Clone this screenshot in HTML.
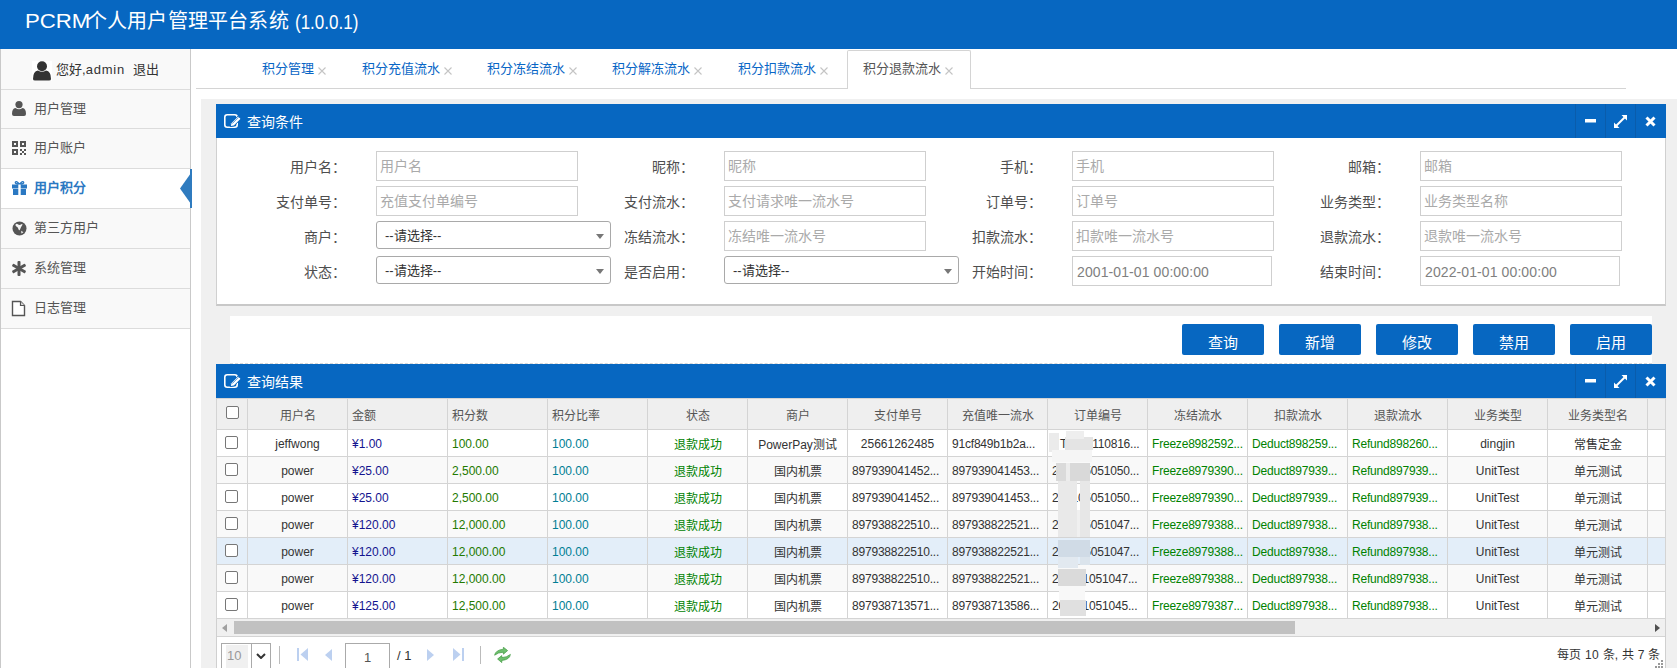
<!DOCTYPE html><html lang="zh-CN"><head><meta charset="utf-8"><style>
*{box-sizing:border-box;margin:0;padding:0}
html,body{width:1677px;height:668px;overflow:hidden;background:#fff;font-family:"Liberation Sans",sans-serif;color:#333}
.a{position:absolute}
#hdr{left:0;top:0;width:1677px;height:49px;background:#0767c1}
#title{left:25px;top:8px;font-size:20px;line-height:26px;color:#fff;white-space:nowrap}
#side{left:0;top:49px;width:191px;height:619px;border-left:1px solid #c9c9c9;border-right:1px solid #c9c9c9;background:#fff}
.mi{position:absolute;left:1px;width:189px;background:#f9f9f9;border-bottom:1px solid #dcdcdc}
.mi .t{position:absolute;left:33px;font-size:13px;line-height:16px;color:#555;white-space:nowrap}
.mi svg{position:absolute}
#tabs .tab{position:absolute;top:61px;font-size:13px;line-height:16px;color:#0866c6;white-space:nowrap}
#tabs .x{position:absolute;top:62px;font-size:13px;line-height:14px;color:#bbb}
#grey{left:201px;top:99px;width:1476px;height:569px;background:#f0f0f0}
.phd{position:absolute;left:216px;width:1450px;height:34px;background:#0767c1}
.phd .tt{position:absolute;left:31px;top:10px;font-size:14px;line-height:17px;color:#fff}
.phd .ic{position:absolute;top:0;width:30px;height:34px;border-left:1px solid #0a5cab}
.lbl{position:absolute;font-size:14px;line-height:17px;color:#4e4e4e;white-space:nowrap;text-align:right}
.inp{position:absolute;height:30px;border:1px solid #cfcfcf;background:#fff;font-size:14px;line-height:28px;color:#aaa;padding-left:3px;white-space:nowrap;overflow:hidden}
.sel{position:absolute;height:28px;border:1px solid #a9a9a9;border-radius:3px;background:#fff;font-size:13px;line-height:28px;color:#333;padding-left:8px}
.sel:after{content:"";position:absolute;right:6px;top:12px;border-left:4px solid transparent;border-right:4px solid transparent;border-top:5px solid #777}
.btn{position:absolute;top:324px;width:82px;height:31px;background:#0767c1;border-radius:2px;color:#fff;font-size:15px;line-height:18px;text-align:center;padding-top:10px}
table{border-collapse:collapse;table-layout:fixed;font-size:12px;color:#333}
td,th{border:1px solid #d4d4d4;height:27px;line-height:15px;white-space:nowrap;overflow:hidden;text-overflow:ellipsis;padding:2px 4px 0 4px;font-weight:normal}
th{background:#efefef;height:31px;color:#555;padding-top:4px}
.c{text-align:center} .l{text-align:left}
</style></head><body>
<div id="hdr" class="a"><div id="title" class="a"><span style="display:inline-block;transform:scaleX(1.11);transform-origin:0 0;margin-right:3px">PCRM</span><span style="letter-spacing:0.2px">个人用户管理平台系统</span></div><div class="a" style="left:295px;top:9px;font-size:20px;line-height:26px;color:#fff;white-space:nowrap;transform:scaleX(0.85);transform-origin:0 0">(1.0.0.1)</div></div>
<div id="side" class="a"></div>
<div class="mi" style="top:49px;height:41px"></div>
<div class="a" style="left:32px;top:61px;width:20px;height:20px;background:#fff"></div>
<svg class="a" style="left:32px;top:61px" width="20" height="20" viewBox="0 0 20 20"><circle cx="10" cy="5.2" r="5" fill="#333"/><path d="M1 18 Q1 10 6 9.5 Q10 12 14 9.5 Q19 10 19 18 Q19 19.5 17 19.5 L3 19.5 Q1 19.5 1 18Z" fill="#333"/></svg>
<div class="a" style="left:56px;top:62px;font-size:13px;line-height:16px;color:#333;white-space:nowrap">您好,<span style="letter-spacing:0.8px">admin</span></div>
<div class="a" style="left:133px;top:62px;font-size:13px;line-height:16px;color:#333;white-space:nowrap">退出</div>
<div class="mi" style="top:90px;height:39px;background:#f9f9f9"><div class="t" style="top:11px;color:#555;font-weight:normal">用户管理</div></div>
<div class="mi" style="top:129px;height:40px;background:#f9f9f9"><div class="t" style="top:11px;color:#555;font-weight:normal">用户账户</div></div>
<div class="mi" style="top:169px;height:40px;background:#fff"><div class="t" style="top:11px;color:#2a78c2;font-weight:bold">用户积分</div></div>
<div class="mi" style="top:209px;height:40px;background:#f9f9f9"><div class="t" style="top:11px;color:#555;font-weight:normal">第三方用户</div></div>
<div class="mi" style="top:249px;height:40px;background:#f9f9f9"><div class="t" style="top:11px;color:#555;font-weight:normal">系统管理</div></div>
<div class="mi" style="top:289px;height:40px;background:#f9f9f9"><div class="t" style="top:11px;color:#555;font-weight:normal">日志管理</div></div>
<svg class="a" style="left:12px;top:101px" width="14" height="15" viewBox="0 0 14 15"><circle cx="7" cy="3.6" r="3.6" fill="#555"/><path d="M0 13 Q0 7.5 3.5 7 Q7 9.5 10.5 7 Q14 7.5 14 13 Q14 15 12 15 L2 15 Q0 15 0 13Z" fill="#555"/></svg>
<svg class="a" style="left:12px;top:141px" width="14" height="14" viewBox="0 0 14 14"><path fill="#555" fill-rule="evenodd" d="M0 0h6v6h-6zM2 2v2h2v-2zM8 0h6v6h-6zM10 2v2h2v-2zM0 8h6v6h-6zM2 10v2h2v-2z"/><path fill="#555" d="M8 8h2v2h-2zM12 8h2v2h-2zM10 10h2v2h-2zM8 12h2v2h-2zM12 12h2v2h-2z"/></svg>
<svg class="a" style="left:12px;top:181px" width="15" height="14" viewBox="0 0 15 14"><path d="M7.5 3.2 Q4.5 -0.5 3.4 1.2 Q2.8 3 7.5 3.2Z M7.5 3.2 Q10.5 -0.5 11.6 1.2 Q12.2 3 7.5 3.2Z" fill="none" stroke="#2a78c2" stroke-width="1.3"/><rect x="0" y="3.5" width="15" height="4" fill="#2a78c2"/><rect x="1" y="8" width="13" height="6" fill="#2a78c2"/><rect x="6.3" y="3.5" width="2.4" height="10.5" fill="#fff"/></svg>
<svg class="a" style="left:12px;top:221px" width="15" height="15" viewBox="0 0 15 15"><circle cx="7.5" cy="7.5" r="7" fill="#555"/><path fill="#f4f4f4" d="M3.6 3.2 Q5 2 6.2 3.6 Q7.5 4.6 9.4 3.2 Q10.2 2.4 10.6 3.6 Q9 6 8 8.6 Q7.4 10 6.6 8.4 Q6 6.4 4.4 5.6 Q3 4.6 3.6 3.2Z M9.2 9.8 L11.4 11.2 L9.4 12.6Z"/></svg>
<svg class="a" style="left:12px;top:261px" width="14" height="15" viewBox="0 0 14 15"><g fill="#555"><rect x="5.5" y="0" width="3" height="15" rx="1"/><rect x="5.5" y="0" width="3" height="15" rx="1" transform="rotate(60 7 7.5)"/><rect x="5.5" y="0" width="3" height="15" rx="1" transform="rotate(-60 7 7.5)"/></g></svg>
<svg class="a" style="left:11px;top:300px" width="15" height="17" viewBox="0 0 15 17"><path d="M1.5 1.5h8l4 4v10h-12z" fill="#fff" stroke="#555" stroke-width="1.4"/><path d="M9.5 1.5v4h4" fill="#ddd" stroke="#555" stroke-width="1.2"/></svg>
<div class="a" style="left:190px;top:169px;width:2px;height:39px;background:#2f7bbf"></div>
<svg class="a" style="left:180px;top:173px" width="11" height="31" viewBox="0 0 11 31"><path d="M11 0 L0 15.5 L11 31Z" fill="#2f7bbf"/></svg>
<div class="a" style="left:196px;top:88px;width:1430px;height:1px;background:#d4d4d4"></div>
<div class="a" style="left:847px;top:50px;width:124px;height:39px;border:1px solid #d4d4d4;border-bottom:none;border-radius:2px 2px 0 0;background:#fff"></div>
<div id="tabs">
<div class="tab" style="left:262px;color:#0866c6">积分管理</div>
<svg class="a" style="left:318px;top:67px" width="8" height="8" viewBox="0 0 8 8"><path d="M0.5 0.5L7.5 7.5M7.5 0.5L0.5 7.5" stroke="#c4c4c4" stroke-width="1.1"/></svg>
<div class="tab" style="left:362px;color:#0866c6">积分充值流水</div>
<svg class="a" style="left:444px;top:67px" width="8" height="8" viewBox="0 0 8 8"><path d="M0.5 0.5L7.5 7.5M7.5 0.5L0.5 7.5" stroke="#c4c4c4" stroke-width="1.1"/></svg>
<div class="tab" style="left:487px;color:#0866c6">积分冻结流水</div>
<svg class="a" style="left:569px;top:67px" width="8" height="8" viewBox="0 0 8 8"><path d="M0.5 0.5L7.5 7.5M7.5 0.5L0.5 7.5" stroke="#c4c4c4" stroke-width="1.1"/></svg>
<div class="tab" style="left:612px;color:#0866c6">积分解冻流水</div>
<svg class="a" style="left:694px;top:67px" width="8" height="8" viewBox="0 0 8 8"><path d="M0.5 0.5L7.5 7.5M7.5 0.5L0.5 7.5" stroke="#c4c4c4" stroke-width="1.1"/></svg>
<div class="tab" style="left:738px;color:#0866c6">积分扣款流水</div>
<svg class="a" style="left:820px;top:67px" width="8" height="8" viewBox="0 0 8 8"><path d="M0.5 0.5L7.5 7.5M7.5 0.5L0.5 7.5" stroke="#c4c4c4" stroke-width="1.1"/></svg>
<div class="tab" style="left:863px;color:#555">积分退款流水</div>
<svg class="a" style="left:945px;top:67px" width="8" height="8" viewBox="0 0 8 8"><path d="M0.5 0.5L7.5 7.5M7.5 0.5L0.5 7.5" stroke="#c4c4c4" stroke-width="1.1"/></svg>
</div>
<div id="grey" class="a"></div>
<div class="a" style="left:216px;top:104px;width:1450px;height:202px;background:#fff;border:1px solid #d0d0d0;border-bottom:2px solid #c8c8c8"></div>
<div class="phd" style="top:104px"><svg class="a" style="left:8px;top:10px" width="18" height="15" viewBox="0 0 18 15"><rect x="0.8" y="0.8" width="12.4" height="12.4" rx="2.4" fill="none" stroke="#fff" stroke-width="1.6"/><path d="M6.2 12.6 L7 9.2 L14.2 2 L17 4.8 L9.8 12Z" fill="#fff" stroke="#0767c1" stroke-width="1"/><path d="M8.3 9.6 L14.6 3.3" stroke="#0767c1" stroke-width="0.6"/></svg><div class="tt">查询条件</div><div class="ic" style="left:1359px"></div><div class="ic" style="left:1389px"></div><div class="ic" style="left:1419px"></div><svg class="a" style="left:1369px;top:15px" width="12" height="4" viewBox="0 0 12 4"><rect x="0" y="0" width="11" height="3.5" fill="#fff"/></svg><svg class="a" style="left:1398px;top:10.5px" width="13" height="13" viewBox="0 0 13 13"><path d="M2.5 10.5 L10.5 2.5" stroke="#fff" stroke-width="1.9"/><path d="M0 13 L0 7.5 L5.5 13Z M13 0 L13 5.5 L7.5 0Z" fill="#fff"/></svg><svg class="a" style="left:1429px;top:12px" width="11" height="11" viewBox="0 0 11 11"><path d="M1.5 1.5L9.5 9.5M9.5 1.5L1.5 9.5" stroke="#fff" stroke-width="3"/></svg></div>
<div class="lbl" style="left:226px;width:120px;top:159px">用户名：</div>
<div class="lbl" style="left:574px;width:120px;top:159px">昵称：</div>
<div class="lbl" style="left:922px;width:120px;top:159px">手机：</div>
<div class="lbl" style="left:1270px;width:120px;top:159px">邮箱：</div>
<div class="lbl" style="left:226px;width:120px;top:194px">支付单号：</div>
<div class="lbl" style="left:574px;width:120px;top:194px">支付流水：</div>
<div class="lbl" style="left:922px;width:120px;top:194px">订单号：</div>
<div class="lbl" style="left:1270px;width:120px;top:194px">业务类型：</div>
<div class="lbl" style="left:226px;width:120px;top:229px">商户：</div>
<div class="lbl" style="left:574px;width:120px;top:229px">冻结流水：</div>
<div class="lbl" style="left:922px;width:120px;top:229px">扣款流水：</div>
<div class="lbl" style="left:1270px;width:120px;top:229px">退款流水：</div>
<div class="lbl" style="left:226px;width:120px;top:264px">状态：</div>
<div class="lbl" style="left:574px;width:120px;top:264px">是否启用：</div>
<div class="lbl" style="left:922px;width:120px;top:264px">开始时间：</div>
<div class="lbl" style="left:1270px;width:120px;top:264px">结束时间：</div>
<div class="inp" style="left:376px;top:151px;width:202px;color:#aaa">用户名</div>
<div class="inp" style="left:724px;top:151px;width:202px;color:#aaa">昵称</div>
<div class="inp" style="left:1072px;top:151px;width:202px;color:#aaa">手机</div>
<div class="inp" style="left:1420px;top:151px;width:202px;color:#aaa">邮箱</div>
<div class="inp" style="left:376px;top:186px;width:202px;color:#aaa">充值支付单编号</div>
<div class="inp" style="left:724px;top:186px;width:202px;color:#aaa">支付请求唯一流水号</div>
<div class="inp" style="left:1072px;top:186px;width:202px;color:#aaa">订单号</div>
<div class="inp" style="left:1420px;top:186px;width:202px;color:#aaa">业务类型名称</div>
<div class="inp" style="left:724px;top:221px;width:202px;color:#aaa">冻结唯一流水号</div>
<div class="inp" style="left:1072px;top:221px;width:202px;color:#aaa">扣款唯一流水号</div>
<div class="inp" style="left:1420px;top:221px;width:202px;color:#aaa">退款唯一流水号</div>
<div class="inp" style="left:1072px;top:256px;width:200px;color:#808080;padding-left:4px;line-height:30px;letter-spacing:0.1px">2001-01-01 00:00:00</div>
<div class="inp" style="left:1420px;top:256px;width:200px;color:#808080;padding-left:4px;line-height:30px;letter-spacing:0.1px">2022-01-01 00:00:00</div>
<div class="sel" style="left:376px;top:221px;width:235px">--请选择--</div>
<div class="sel" style="left:376px;top:256px;width:235px">--请选择--</div>
<div class="sel" style="left:724px;top:256px;width:235px">--请选择--</div>
<div class="a" style="left:230px;top:316px;width:1422px;height:48px;background:#fff"></div>
<div class="btn" style="left:1182px">查询</div>
<div class="btn" style="left:1279px">新增</div>
<div class="btn" style="left:1376px">修改</div>
<div class="btn" style="left:1473px">禁用</div>
<div class="btn" style="left:1570px">启用</div>
<div class="a" style="left:216px;top:364px;width:1450px;height:320px;background:#fff;border:1px solid #d0d0d0"></div>
<div class="phd" style="top:364px"><svg class="a" style="left:8px;top:10px" width="18" height="15" viewBox="0 0 18 15"><rect x="0.8" y="0.8" width="12.4" height="12.4" rx="2.4" fill="none" stroke="#fff" stroke-width="1.6"/><path d="M6.2 12.6 L7 9.2 L14.2 2 L17 4.8 L9.8 12Z" fill="#fff" stroke="#0767c1" stroke-width="1"/><path d="M8.3 9.6 L14.6 3.3" stroke="#0767c1" stroke-width="0.6"/></svg><div class="tt">查询结果</div><div class="ic" style="left:1359px"></div><div class="ic" style="left:1389px"></div><div class="ic" style="left:1419px"></div><svg class="a" style="left:1369px;top:15px" width="12" height="4" viewBox="0 0 12 4"><rect x="0" y="0" width="11" height="3.5" fill="#fff"/></svg><svg class="a" style="left:1398px;top:10.5px" width="13" height="13" viewBox="0 0 13 13"><path d="M2.5 10.5 L10.5 2.5" stroke="#fff" stroke-width="1.9"/><path d="M0 13 L0 7.5 L5.5 13Z M13 0 L13 5.5 L7.5 0Z" fill="#fff"/></svg><svg class="a" style="left:1429px;top:12px" width="11" height="11" viewBox="0 0 11 11"><path d="M1.5 1.5L9.5 9.5M9.5 1.5L1.5 9.5" stroke="#fff" stroke-width="3"/></svg></div>
<table class="a" style="left:216px;top:398px;width:1449px"><colgroup><col style="width:31px"><col style="width:100px"><col style="width:100px"><col style="width:100px"><col style="width:100px"><col style="width:100px"><col style="width:100px"><col style="width:100px"><col style="width:100px"><col style="width:100px"><col style="width:100px"><col style="width:100px"><col style="width:100px"><col style="width:100px"><col style="width:100px"><col style="width:18px"></colgroup><tr><th class="c"><span style="display:inline-block;position:relative;top:-4px;width:13px;height:13px;border:1px solid #777;border-radius:2px;background:#fff;vertical-align:middle"></span></th><th class="c">用户名</th><th class="l">金额</th><th class="l">积分数</th><th class="l">积分比率</th><th class="c">状态</th><th class="c">商户</th><th class="c">支付单号</th><th class="c">充值唯一流水</th><th class="c">订单编号</th><th class="c">冻结流水</th><th class="c">扣款流水</th><th class="c">退款流水</th><th class="c">业务类型</th><th class="c">业务类型名</th><th class="c"></th></tr><tr style="background:#fff"><td class="c"><span style="display:inline-block;position:relative;top:-1.5px;left:-1px;width:13px;height:13px;border:1px solid #777;border-radius:2px;background:#fff;vertical-align:middle"></span></td><td class="c" style="color:#333;">jeffwong</td><td class="l" style="color:#14148f;">¥1.00</td><td class="l" style="color:#237a00;">100.00</td><td class="l" style="color:#007e94;">100.00</td><td class="c" style="color:#008200;padding-top:4px;">退款成功</td><td class="c" style="color:#333;padding-top:4px;">PowerPay测试</td><td class="c" style="color:#333;">25661262485</td><td class="l" style="color:#333;letter-spacing:-0.2px;text-overflow:clip;text-align:left;">91cf849b1b2a...</td><td class="l" style="color:#333;letter-spacing:-0.2px;text-overflow:clip;text-align:left;padding-left:12px;">T2021110816...</td><td class="l" style="color:#008200;letter-spacing:-0.2px;text-overflow:clip;text-align:left;">Freeze8982592...</td><td class="l" style="color:#008200;letter-spacing:-0.2px;text-overflow:clip;text-align:left;">Deduct898259...</td><td class="l" style="color:#008200;letter-spacing:-0.2px;text-overflow:clip;text-align:left;">Refund898260...</td><td class="c" style="color:#333;">dingjin</td><td class="c" style="color:#333;padding-top:4px;">常售定金</td><td></td></tr><tr style="background:#f9f9f9"><td class="c"><span style="display:inline-block;position:relative;top:-1.5px;left:-1px;width:13px;height:13px;border:1px solid #777;border-radius:2px;background:#fff;vertical-align:middle"></span></td><td class="c" style="color:#333;">power</td><td class="l" style="color:#14148f;">¥25.00</td><td class="l" style="color:#237a00;">2,500.00</td><td class="l" style="color:#007e94;">100.00</td><td class="c" style="color:#008200;padding-top:4px;">退款成功</td><td class="c" style="color:#333;padding-top:4px;">国内机票</td><td class="c" style="color:#333;letter-spacing:-0.2px;text-overflow:clip;text-align:left;">897939041452...</td><td class="l" style="color:#333;letter-spacing:-0.2px;text-overflow:clip;text-align:left;">897939041453...</td><td class="l" style="color:#333;letter-spacing:-0.2px;text-overflow:clip;text-align:left;">202105051050...</td><td class="l" style="color:#008200;letter-spacing:-0.2px;text-overflow:clip;text-align:left;">Freeze8979390...</td><td class="l" style="color:#008200;letter-spacing:-0.2px;text-overflow:clip;text-align:left;">Deduct897939...</td><td class="l" style="color:#008200;letter-spacing:-0.2px;text-overflow:clip;text-align:left;">Refund897939...</td><td class="c" style="color:#333;">UnitTest</td><td class="c" style="color:#333;padding-top:4px;">单元测试</td><td></td></tr><tr style="background:#fff"><td class="c"><span style="display:inline-block;position:relative;top:-1.5px;left:-1px;width:13px;height:13px;border:1px solid #777;border-radius:2px;background:#fff;vertical-align:middle"></span></td><td class="c" style="color:#333;">power</td><td class="l" style="color:#14148f;">¥25.00</td><td class="l" style="color:#237a00;">2,500.00</td><td class="l" style="color:#007e94;">100.00</td><td class="c" style="color:#008200;padding-top:4px;">退款成功</td><td class="c" style="color:#333;padding-top:4px;">国内机票</td><td class="c" style="color:#333;letter-spacing:-0.2px;text-overflow:clip;text-align:left;">897939041452...</td><td class="l" style="color:#333;letter-spacing:-0.2px;text-overflow:clip;text-align:left;">897939041453...</td><td class="l" style="color:#333;letter-spacing:-0.2px;text-overflow:clip;text-align:left;">202105051050...</td><td class="l" style="color:#008200;letter-spacing:-0.2px;text-overflow:clip;text-align:left;">Freeze8979390...</td><td class="l" style="color:#008200;letter-spacing:-0.2px;text-overflow:clip;text-align:left;">Deduct897939...</td><td class="l" style="color:#008200;letter-spacing:-0.2px;text-overflow:clip;text-align:left;">Refund897939...</td><td class="c" style="color:#333;">UnitTest</td><td class="c" style="color:#333;padding-top:4px;">单元测试</td><td></td></tr><tr style="background:#f9f9f9"><td class="c"><span style="display:inline-block;position:relative;top:-1.5px;left:-1px;width:13px;height:13px;border:1px solid #777;border-radius:2px;background:#fff;vertical-align:middle"></span></td><td class="c" style="color:#333;">power</td><td class="l" style="color:#14148f;">¥120.00</td><td class="l" style="color:#237a00;">12,000.00</td><td class="l" style="color:#007e94;">100.00</td><td class="c" style="color:#008200;padding-top:4px;">退款成功</td><td class="c" style="color:#333;padding-top:4px;">国内机票</td><td class="c" style="color:#333;letter-spacing:-0.2px;text-overflow:clip;text-align:left;">897938822510...</td><td class="l" style="color:#333;letter-spacing:-0.2px;text-overflow:clip;text-align:left;">897938822521...</td><td class="l" style="color:#333;letter-spacing:-0.2px;text-overflow:clip;text-align:left;">202105051047...</td><td class="l" style="color:#008200;letter-spacing:-0.2px;text-overflow:clip;text-align:left;">Freeze8979388...</td><td class="l" style="color:#008200;letter-spacing:-0.2px;text-overflow:clip;text-align:left;">Deduct897938...</td><td class="l" style="color:#008200;letter-spacing:-0.2px;text-overflow:clip;text-align:left;">Refund897938...</td><td class="c" style="color:#333;">UnitTest</td><td class="c" style="color:#333;padding-top:4px;">单元测试</td><td></td></tr><tr style="background:#e3eef9"><td class="c"><span style="display:inline-block;position:relative;top:-1.5px;left:-1px;width:13px;height:13px;border:1px solid #777;border-radius:2px;background:#fff;vertical-align:middle"></span></td><td class="c" style="color:#333;">power</td><td class="l" style="color:#14148f;">¥120.00</td><td class="l" style="color:#237a00;">12,000.00</td><td class="l" style="color:#007e94;">100.00</td><td class="c" style="color:#008200;padding-top:4px;">退款成功</td><td class="c" style="color:#333;padding-top:4px;">国内机票</td><td class="c" style="color:#333;letter-spacing:-0.2px;text-overflow:clip;text-align:left;">897938822510...</td><td class="l" style="color:#333;letter-spacing:-0.2px;text-overflow:clip;text-align:left;">897938822521...</td><td class="l" style="color:#333;letter-spacing:-0.2px;text-overflow:clip;text-align:left;">202105051047...</td><td class="l" style="color:#008200;letter-spacing:-0.2px;text-overflow:clip;text-align:left;">Freeze8979388...</td><td class="l" style="color:#008200;letter-spacing:-0.2px;text-overflow:clip;text-align:left;">Deduct897938...</td><td class="l" style="color:#008200;letter-spacing:-0.2px;text-overflow:clip;text-align:left;">Refund897938...</td><td class="c" style="color:#333;">UnitTest</td><td class="c" style="color:#333;padding-top:4px;">单元测试</td><td></td></tr><tr style="background:#f9f9f9"><td class="c"><span style="display:inline-block;position:relative;top:-1.5px;left:-1px;width:13px;height:13px;border:1px solid #777;border-radius:2px;background:#fff;vertical-align:middle"></span></td><td class="c" style="color:#333;">power</td><td class="l" style="color:#14148f;">¥120.00</td><td class="l" style="color:#237a00;">12,000.00</td><td class="l" style="color:#007e94;">100.00</td><td class="c" style="color:#008200;padding-top:4px;">退款成功</td><td class="c" style="color:#333;padding-top:4px;">国内机票</td><td class="c" style="color:#333;letter-spacing:-0.2px;text-overflow:clip;text-align:left;">897938822510...</td><td class="l" style="color:#333;letter-spacing:-0.2px;text-overflow:clip;text-align:left;">897938822521...</td><td class="l" style="color:#333;letter-spacing:-0.2px;text-overflow:clip;text-align:left;">202111051047...</td><td class="l" style="color:#008200;letter-spacing:-0.2px;text-overflow:clip;text-align:left;">Freeze8979388...</td><td class="l" style="color:#008200;letter-spacing:-0.2px;text-overflow:clip;text-align:left;">Deduct897938...</td><td class="l" style="color:#008200;letter-spacing:-0.2px;text-overflow:clip;text-align:left;">Refund897938...</td><td class="c" style="color:#333;">UnitTest</td><td class="c" style="color:#333;padding-top:4px;">单元测试</td><td></td></tr><tr style="background:#fff"><td class="c"><span style="display:inline-block;position:relative;top:-1.5px;left:-1px;width:13px;height:13px;border:1px solid #777;border-radius:2px;background:#fff;vertical-align:middle"></span></td><td class="c" style="color:#333;">power</td><td class="l" style="color:#14148f;">¥125.00</td><td class="l" style="color:#237a00;">12,500.00</td><td class="l" style="color:#007e94;">100.00</td><td class="c" style="color:#008200;padding-top:4px;">退款成功</td><td class="c" style="color:#333;padding-top:4px;">国内机票</td><td class="c" style="color:#333;letter-spacing:-0.2px;text-overflow:clip;text-align:left;">897938713571...</td><td class="l" style="color:#333;letter-spacing:-0.2px;text-overflow:clip;text-align:left;">897938713586...</td><td class="l" style="color:#333;letter-spacing:-0.2px;text-overflow:clip;text-align:left;">202111051045...</td><td class="l" style="color:#008200;letter-spacing:-0.2px;text-overflow:clip;text-align:left;">Freeze8979387...</td><td class="l" style="color:#008200;letter-spacing:-0.2px;text-overflow:clip;text-align:left;">Deduct897938...</td><td class="l" style="color:#008200;letter-spacing:-0.2px;text-overflow:clip;text-align:left;">Refund897938...</td><td class="c" style="color:#333;">UnitTest</td><td class="c" style="color:#333;padding-top:4px;">单元测试</td><td></td></tr></table>
<div class="a" style="left:1049px;top:433px;width:10px;height:19px;background:#ebebeb"></div>
<div class="a" style="left:1065px;top:437px;width:28px;height:13px;background:#e4e4e4"></div>
<div class="a" style="left:1066px;top:431px;width:18px;height:8px;background:#eeeeee"></div>
<div class="a" style="left:1052px;top:450px;width:40px;height:12px;background:#f5f5f5"></div>
<div class="a" style="left:1056px;top:463px;width:10px;height:18px;background:#dadada"></div>
<div class="a" style="left:1066px;top:463px;width:4px;height:18px;background:#ececec"></div>
<div class="a" style="left:1070px;top:463px;width:20px;height:18px;background:#d9d9d9"></div>
<div class="a" style="left:1058px;top:481px;width:19px;height:56px;background:#e9e9e9"></div>
<div class="a" style="left:1080px;top:481px;width:10px;height:56px;background:#e7e7e7"></div>
<div class="a" style="left:1077px;top:510px;width:3px;height:27px;background:#f0f0f0"></div>
<div class="a" style="left:1058px;top:540px;width:32px;height:17px;background:#d0dbe6"></div>
<div class="a" style="left:1058px;top:557px;width:20px;height:11px;background:#e2e9f0"></div>
<div class="a" style="left:1080px;top:557px;width:10px;height:8px;background:#dbe4ec"></div>
<div class="a" style="left:1058px;top:569px;width:28px;height:17px;background:#dadada"></div>
<div class="a" style="left:1059px;top:586px;width:26px;height:14px;background:#f8f8f8"></div>
<div class="a" style="left:1060px;top:600px;width:26px;height:16px;background:#e0e0e0"></div>
<div class="a" style="left:217px;top:618px;width:1448px;height:19px;background:#f0f0f0;border-top:1px solid #d4d4d4;border-bottom:1px solid #d4d4d4"></div>
<div class="a" style="left:234px;top:621px;width:1061px;height:13px;background:#c1c1c1"></div>
<svg class="a" style="left:222px;top:624px" width="5" height="8" viewBox="0 0 5 8"><path d="M5 0L0 4L5 8Z" fill="#a0a0a0"/></svg>
<svg class="a" style="left:1655px;top:624px" width="5" height="8" viewBox="0 0 5 8"><path d="M0 0L5 4L0 8Z" fill="#505050"/></svg>
<div class="a" style="left:221px;top:643px;width:50px;height:30px;border:1px solid #aaa;background:#fff"></div>
<div class="a" style="left:226px;top:645px;width:22px;height:23px;background:#f0f0f0;color:#999;font-size:13px;line-height:22px;padding-left:1px">10</div>
<div class="a" style="left:251px;top:643px;width:1px;height:25px;background:#aaa"></div>
<svg class="a" style="left:256px;top:653px" width="10" height="6" viewBox="0 0 10 6"><path d="M1 1L5 5L9 1" fill="none" stroke="#333" stroke-width="2"/></svg>
<div class="a" style="left:279px;top:646px;width:1px;height:18px;background:#bbb"></div>
<div class="a" style="left:480px;top:646px;width:1px;height:18px;background:#bbb"></div>
<svg class="a" style="left:297px;top:648px" width="11" height="13" viewBox="0 0 11 13"><rect x="0" y="0" width="2" height="13" fill="#bcd0f0"/><path d="M11 0L3.5 6.5L11 13Z" fill="#bcd0f0"/></svg>
<svg class="a" style="left:325px;top:649px" width="7" height="12" viewBox="0 0 7 12"><path d="M7 0L0 6L7 12Z" fill="#bcd0f0"/></svg>
<svg class="a" style="left:427px;top:649px" width="7" height="12" viewBox="0 0 7 12"><path d="M0 0L7 6L0 12Z" fill="#bcd0f0"/></svg>
<svg class="a" style="left:453px;top:648px" width="11" height="13" viewBox="0 0 11 13"><path d="M0 0L7.5 6.5L0 13Z" fill="#bcd0f0"/><rect x="9" y="0" width="2" height="13" fill="#bcd0f0"/></svg>
<div class="a" style="left:345px;top:643px;width:45px;height:30px;border:1px solid #aaa;background:#fff;text-align:center;font-size:13px;line-height:26px;padding-top:1px;color:#555">1</div>
<div class="a" style="left:397px;top:648px;font-size:13px;line-height:16px;color:#333">/ 1</div>
<svg class="a" style="left:494px;top:647px" width="17" height="16" viewBox="0 0 17 16"><path d="M0.6 8.2 Q1.6 3 9.4 2.2 L9.4 0.2 L13.6 3.6 L9.4 7.2 L9.4 5.2 Q4 5.4 0.6 8.2Z M16.4 7.4 Q15.6 12.8 7.8 13.4 L7.8 15.6 L3.6 12 L7.8 8.6 L7.8 10.6 Q13 10.4 16.4 7.4Z" fill="#6dbf6d" stroke="#3f9a3f" stroke-width="0.7"/></svg>
<div class="a" style="left:230px;top:363px;width:1422px;height:1px;border-top:1px dashed #d8d8d8"></div>
<svg class="a" style="left:1655px;top:660px" width="8" height="8" viewBox="0 0 8 8"><g fill="#999"><rect x="6" y="0" width="2" height="2"/><rect x="3" y="3" width="2" height="2"/><rect x="6" y="3" width="2" height="2"/><rect x="0" y="6" width="2" height="2"/><rect x="3" y="6" width="2" height="2"/><rect x="6" y="6" width="2" height="2"/></g></svg>
<div class="a" style="left:1557px;top:647px;font-size:12px;line-height:16px;color:#333;white-space:nowrap;letter-spacing:0.25px">每页 10 条, 共 7 条</div>
</body></html>
